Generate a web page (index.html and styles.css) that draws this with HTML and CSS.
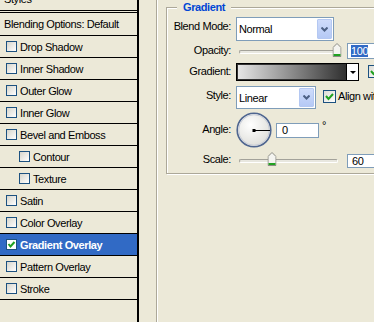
FILE: index.html
```html
<!DOCTYPE html>
<html lang="en">

<head>
    <meta charset="UTF-8">
    <meta name="viewport" content="width=device-width, initial-scale=1.0">
    <title>Layer Style</title>
    <link rel="stylesheet" href="styles.css">
</head>

<body>
    <div class="dialog">
        <!-- left list of effects -->
        <aside class="styles">
            <div class="styles-head"><span>Styles</span></div>
            <div class="style-row first">Blending Options: Default</div>
            <div class="style-row"><span class="box"></span>Drop Shadow</div>
            <div class="style-row"><span class="box"></span>Inner Shadow</div>
            <div class="style-row"><span class="box"></span>Outer Glow</div>
            <div class="style-row"><span class="box"></span>Inner Glow</div>
            <div class="style-row"><span class="box"></span>Bevel and Emboss</div>
            <div class="style-row sub"><span class="box"></span>Contour</div>
            <div class="style-row sub"><span class="box"></span>Texture</div>
            <div class="style-row"><span class="box"></span>Satin</div>
            <div class="style-row"><span class="box"></span>Color Overlay</div>
            <div class="style-row selected">
                <span class="box checked">
                    <svg width="9" height="9" viewBox="0 0 9 9"><polyline points="1.5,4 3.5,6.5 7.5,2" fill="none" stroke="#21A121" stroke-width="2"/></svg>
                </span>Gradient Overlay
            </div>
            <div class="style-row"><span class="box"></span>Pattern Overlay</div>
            <div class="style-row"><span class="box"></span>Stroke</div>
        </aside>

        <!-- options panel -->
        <section class="options">
            <div class="group">
                <fieldset class="gradient-box">
                    <legend>Gradient</legend>

                    <div class="field field-blend">
                        <label class="label">Blend Mode:</label>
                        <div class="select select-blend">
                            <span class="select-text">Normal</span>
                            <span class="drop"><svg width="7" height="5" viewBox="0 0 7 5"><polyline points="0.5,0.5 3.5,3.5 6.5,0.5" fill="none" stroke="#4D6185" stroke-width="2"/></svg></span>
                        </div>
                    </div>

                    <div class="field field-opacity">
                        <label class="label">Opacity:</label>
                        <div class="slider">
                            <div class="track">
                                <span class="thumb" style="left: 100%">
                                    <svg width="9" height="14" viewBox="0 0 9 14"><path d="M0.5 4.5 L4.5 0.5 L8.5 4.5 L8.5 13.5 L0.5 13.5 Z" fill="#F4F4F0" stroke="#8C8C84"/><rect x="1" y="11" width="7" height="2" fill="#21A121"/></svg>
                                </span>
                            </div>
                        </div>
                        <div class="num num-opacity"><span class="sel">100</span></div>
                    </div>

                    <div class="field field-gradient">
                        <label class="label">Gradient:</label>
                        <div class="swatch">
                            <span class="grad-fill"></span>
                            <span class="grad-arrow"><span class="tri"></span></span>
                        </div>
                        <span class="check check-reverse">
                            <svg width="11" height="11" viewBox="0 0 11 11"><polyline points="2,5 4.5,8 9,3" fill="none" stroke="#21A121" stroke-width="2"/></svg>
                        </span>
                    </div>

                    <div class="field field-style">
                        <label class="label">Style:</label>
                        <div class="select select-style">
                            <span class="select-text">Linear</span>
                            <span class="drop"><svg width="7" height="5" viewBox="0 0 7 5"><polyline points="0.5,0.5 3.5,3.5 6.5,0.5" fill="none" stroke="#4D6185" stroke-width="2"/></svg></span>
                        </div>
                        <span class="check check-align">
                            <svg width="11" height="11" viewBox="0 0 11 11"><polyline points="2,5 4.5,8 9,3" fill="none" stroke="#21A121" stroke-width="2"/></svg>
                        </span>
                        <span class="check-label">Align with Layer</span>
                    </div>

                    <div class="field field-angle">
                        <label class="label">Angle:</label>
                        <svg class="dial" width="36" height="36" viewBox="0 0 36 36">
                            <defs>
                                <radialGradient id="dialFill" cx="40%" cy="35%" r="70%">
                                    <stop offset="0" stop-color="#FFFFFF"/>
                                    <stop offset="1" stop-color="#DDDDD8"/>
                                </radialGradient>
                            </defs>
                            <circle cx="18" cy="18" r="16.8" fill="url(#dialFill)" stroke="#4F6690" stroke-width="1.6"/>
                            <circle cx="18" cy="18" r="15.3" fill="none" stroke="#C9CED9" stroke-width="1"/>
                            <line x1="18" y1="18.5" x2="34" y2="18.5" stroke="#000" stroke-width="1"/>
                            <rect x="16.5" y="17" width="3" height="3" fill="#000"/>
                        </svg>
                        <div class="num num-angle">0</div>
                        <span class="deg">°</span>
                    </div>

                    <div class="field field-scale">
                        <label class="label">Scale:</label>
                        <div class="slider">
                            <div class="track">
                                <span class="thumb" style="left: 33%">
                                    <svg width="9" height="14" viewBox="0 0 9 14"><path d="M0.5 4.5 L4.5 0.5 L8.5 4.5 L8.5 13.5 L0.5 13.5 Z" fill="#F4F4F0" stroke="#8C8C84"/><rect x="1" y="11" width="7" height="2" fill="#21A121"/></svg>
                                </span>
                            </div>
                        </div>
                        <div class="num num-scale">60</div>
                    </div>
                </fieldset>
            </div>
        </section>
    </div>
</body>

</html>
```

FILE: styles.css
```css
body {
    margin: 0;
    background-color: #ECE9D8;
    font-family: 'Liberation Sans', Arial, sans-serif;
    font-size: 11px;
    letter-spacing: -0.4px;
    color: #000;
}

.dialog {
    display: flex;
    width: 374px;
    height: 322px;
    overflow: hidden;
}

/* left list */
.styles {
    flex: none;
    width: 137px;
    border-right: 2px solid #000;
}

.styles-head {
    height: 10px;
    padding-left: 4px;
    border-bottom: 1px solid #000;
    margin-bottom: 1px;
    overflow: hidden;
}

.styles-head span {
    display: block;
    margin-top: -7px;
    line-height: 13px;
}

.style-row {
    display: flex;
    align-items: center;
    gap: 3px;
    height: 21px;
    padding-left: 6px;
    border-bottom: 1px solid #000;
    white-space: nowrap;
}

.style-row.first {
    height: 22px;
    padding-left: 4px;
    border-top: 1px solid #000;
}

.style-row.sub {
    padding-left: 19px;
}

.style-row.selected {
    background-color: #316AC5;
    color: #fff;
    font-weight: bold;
}

.box {
    flex: none;
    display: flex;
    width: 9px;
    height: 9px;
    border: 1px solid #1C5180;
    background: linear-gradient(135deg, #D6D5CC, #FFFFFF);
}

.box.checked {
    background: #fff;
}

/* right side */
.options {
    flex: 1;
    padding-left: 17px;
}

.group {
    height: 100%;
    padding-left: 9px;
    border-left: 1px solid #ACA899;
    box-shadow: inset 1px 0 #fff;
    overflow: hidden;
}

.gradient-box {
    width: 240px;
    margin: 0;
    padding: 3px 0 3px 0;
    border: 1px solid #ACA899;
    box-shadow: inset 1px 1px #fff, 1px 1px #fff;
}

.gradient-box legend {
    margin-left: 10px;
    padding: 0 6px;
    line-height: 14px;
    font-weight: bold;
    color: #0046D5;
    background-color: #ECE9D8;
}

.field {
    display: flex;
    align-items: flex-start;
    white-space: nowrap;
}

.label {
    flex: none;
    width: 64px;
    margin-right: 5px;
    text-align: right;
    line-height: 13px;
}

.field-blend { height: 25px; }
.field-blend .label { padding-top: 3px; }

.field-opacity { height: 19px; }
.field-opacity .label { padding-top: 2px; }

.field-gradient { height: 23px; }
.field-gradient .label { padding-top: 4px; }

.field-style { height: 27px; }
.field-style .label { padding-top: 5px; }

.field-angle { height: 40px; }
.field-angle .label { padding-top: 12px; }

.field-scale { height: 19px; }
.field-scale .label { padding-top: 2px; }

/* combo boxes */
.select {
    display: flex;
    box-sizing: border-box;
    height: 24px;
    padding: 1px;
    border: 1px solid #7F9DB9;
    background-color: #fff;
}

.select-text {
    flex: 1;
    padding-left: 1px;
    line-height: 20px;
}

.drop {
    display: flex;
    align-items: center;
    justify-content: center;
    width: 15px;
    box-sizing: border-box;
    border: 1px solid #B4C8F2;
    border-radius: 1px;
    background: linear-gradient(#CFDCFB, #B5C9F5);
}

.select-blend {
    width: 98px;
}

.select-style {
    width: 80px;
    height: 23px;
    margin-top: 2px;
}

/* sliders */
.slider {
    flex: none;
    width: 111px;
}

.track {
    position: relative;
    box-sizing: border-box;
    width: 99px;
    height: 4px;
    margin: 8px 0 0 3px;
    border: 1px solid #A3A29A;
    border-right-color: #fff;
    border-bottom-color: #fff;
    border-radius: 2px;
    background-color: #E8E7DF;
}

.thumb {
    position: absolute;
    top: -8px;
    display: flex;
    transform: translateX(-50%);
}

/* text boxes */
.num {
    box-sizing: border-box;
    width: 40px;
    border: 1px solid #7F9DB9;
    background-color: #fff;
    padding-left: 3px;
}

.num-opacity {
    height: 16px;
    margin-top: 1px;
    line-height: 14px;
}

.sel {
    background-color: #316AC5;
    color: #fff;
}

.num-angle {
    width: 43px;
    height: 15px;
    margin: 12px 0 0 4px;
    padding-left: 5px;
    line-height: 13px;
}

.num-scale {
    height: 14px;
    margin-top: 3px;
    padding-left: 4px;
    line-height: 12px;
}

.deg {
    margin: 8px 0 0 3px;
    line-height: 13px;
}

/* gradient picker */
.swatch {
    display: flex;
    box-sizing: border-box;
    width: 123px;
    height: 18px;
    margin-top: 2px;
    border: 1px solid #000;
    box-shadow: inset 0 0 0 1px #333;
}

.grad-fill {
    flex: 1;
    margin: 1px 0 1px 1px;
    background: linear-gradient(to right, #E6E6E6, #303030);
}

.grad-arrow {
    display: flex;
    align-items: center;
    justify-content: center;
    width: 11px;
    border-left: 1px solid #000;
    background-color: #fff;
}

.tri {
    width: 0;
    height: 0;
    border-left: 3px solid transparent;
    border-right: 3px solid transparent;
    border-top: 3px solid #000;
}

/* checkboxes */
.check {
    flex: none;
    display: flex;
    width: 11px;
    height: 11px;
    border: 1px solid #1C5180;
    background: linear-gradient(135deg, #DCDBD5, #fff);
}

.check-reverse {
    margin: 4px 0 0 9px;
}

.check-align {
    margin: 6px 0 0 7px;
}

.check-label {
    margin: 6px 0 0 2px;
    line-height: 13px;
}

.dial {
    flex: none;
    margin-top: 1px;
}
```
